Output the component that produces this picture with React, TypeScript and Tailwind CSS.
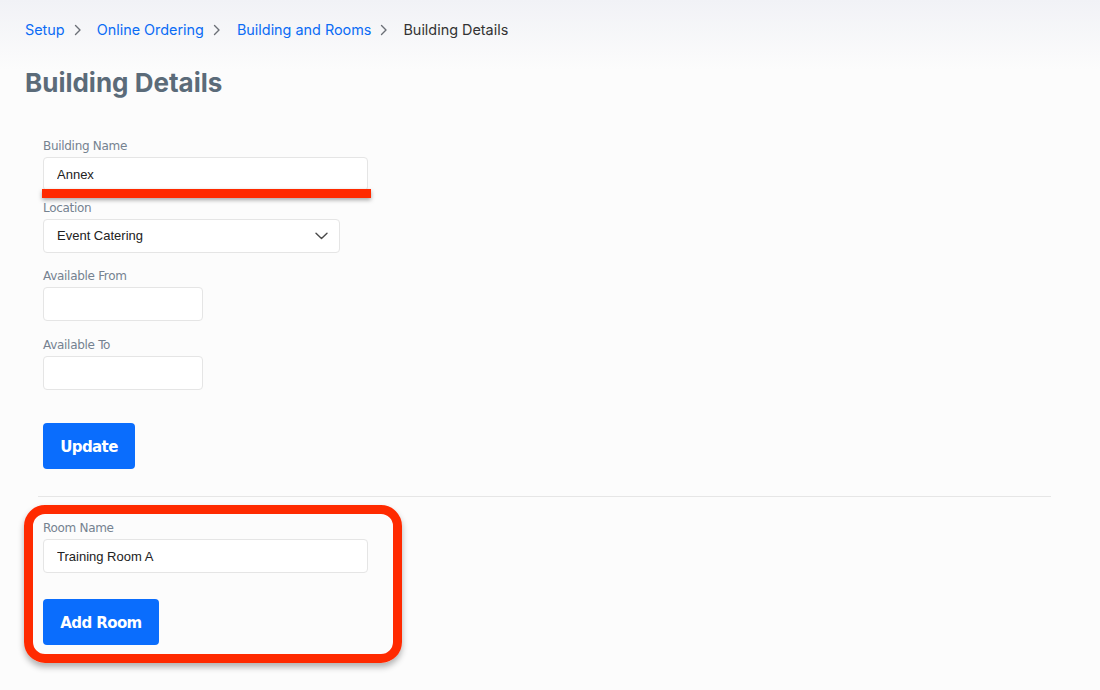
import React from "react";

const labelCls =
  "block text-[12px] leading-[14px] text-[#758290] font-['DejaVu_Sans',sans-serif] tracking-[-0.3px]";
const inputCls =
  "h-[34px] rounded-[4px] border border-[#e5e5e5] bg-white px-[13px] text-[13px] text-[#222] font-['Liberation_Sans',Arial,sans-serif] outline-none";
const btnCls =
  "h-[46px] whitespace-nowrap rounded-[4px] bg-[#0a6dfd] pt-[2px] text-[15px] font-bold text-white font-['DejaVu_Sans',sans-serif] tracking-[-0.6px]";

const Chevron = () => (
  <svg width="8" height="12" viewBox="0 0 8 12" className="mx-[9px] shrink-0" fill="none">
    <path d="M1.5 1.5 6 6l-4.5 4.5" stroke="#6b6f76" strokeWidth="1.4" strokeLinecap="round" strokeLinejoin="round" />
  </svg>
);

const App = () => {
  return (
    <div className="relative min-h-[690px] w-full bg-[linear-gradient(to_bottom,#f1f2f6_0px,#fcfcfc_70px,#fcfcfc_100%)] font-['Inter',sans-serif]">
      <nav className="flex items-center pl-[25px] pt-[20px] text-[14.4px] leading-[20px]">
        <a className="text-[#0b6cf5]">Setup</a>
        <Chevron />
        <a className="ml-[6px] text-[#0b6cf5]">Online Ordering</a>
        <Chevron />
        <a className="ml-[7px] text-[#0b6cf5]">Building and Rooms</a>
        <Chevron />
        <span className="ml-[6px] text-[#333]">Building Details</span>
      </nav>

      <h1 className="mt-[28px] pl-[25px] text-[26px] font-bold leading-[30px] text-[#5b6b79]">Building Details</h1>

      <div className="pl-[43px] pt-[41px]">
        <label className={labelCls}>Building Name</label>
        <div className="relative mt-[4px] w-[325px]">
          <input className={inputCls + " w-full"} defaultValue="Annex" />
          <div className="absolute left-[-1px] top-[32px] h-[9px] w-[329px] bg-[#ff2a00] shadow-[0_2px_4px_rgba(0,0,0,0.35)]" />
        </div>

        <label className={labelCls + " mt-[10px]"}>Location</label>
        <div className="relative mt-[4px] w-[297px]">
          <div className={inputCls + " flex w-full items-center"}>Event Catering</div>
          <svg className="absolute right-[12px] top-[13px]" width="13" height="8" viewBox="0 0 13 8" fill="none">
            <path d="M1 1.2 6.5 6.5 12 1.2" stroke="#4a4a4a" strokeWidth="1.4" strokeLinecap="round" strokeLinejoin="round" />
          </svg>
        </div>

        <label className={labelCls + " mt-[16px]"}>Available From</label>
        <input className={inputCls + " mt-[4px] block w-[160px]"} />

        <label className={labelCls + " mt-[17px]"}>Available To</label>
        <input className={inputCls + " mt-[4px] block w-[160px]"} />

        <button className={btnCls + " mt-[33px] w-[92px]"}>Update</button>
      </div>

      <div className="ml-[38px] mt-[27px] h-px w-[1013px] bg-[#e6e6e6]" />

      <div className="relative pl-[43px] pt-[24px]">
        <div className="pointer-events-none absolute left-[24px] top-[8px] h-[158px] w-[378px] rounded-[21px] border-[9px] border-[#ff2a00] shadow-[0_4px_6px_rgba(0,0,0,0.3)]" />
        <label className={labelCls}>Room Name</label>
        <input className={inputCls + " mt-[4px] block w-[325px]"} defaultValue="Training Room A" />
        <button className={btnCls + " mt-[26px] w-[116px]"}>Add Room</button>
      </div>
    </div>
  );
};

export default App;
